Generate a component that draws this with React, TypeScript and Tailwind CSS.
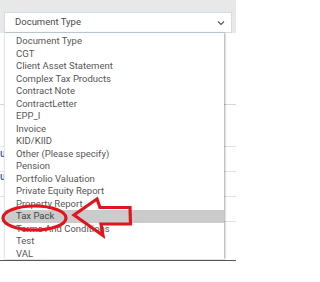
const options = [
  "Document Type",
  "CGT",
  "Client Asset Statement",
  "Complex Tax Products",
  "Contract Note",
  "ContractLetter",
  "EPP_I",
  "Invoice",
  "KID/KIID",
  "Other (Please specify)",
  "Pension",
  "Portfolio Valuation",
  "Private Equity Report",
  "Property Report",
  "Tax Pack",
  "Terms And Conditions",
  "Test",
  "VAL",
];

const selected = "Tax Pack";

function Chevron() {
  return (
    <svg width="8" height="6" viewBox="0 0 8 6" fill="none" className="text-[#555]">
      <path d="M1 1.5L4 4.5L7 1.5" stroke="currentColor" strokeWidth="1.2" />
    </svg>
  );
}

function Annotation() {
  return (
    <svg
      className="pointer-events-none absolute left-0 top-0"
      width="236"
      height="282"
      viewBox="0 0 236 282"
      fill="none"
    >
      <ellipse cx="34.5" cy="218" rx="31.5" ry="12" stroke="#e0161e" strokeWidth="3.2" />
      <path
        d="M74 215L97 199L100 207.5L130 207.5L130.5 224L101 224L103 235.5Z"
        stroke="#e0161e"
        strokeWidth="3.2"
        strokeLinejoin="miter"
      />
    </svg>
  );
}

export default function App() {
  return (
    <div className="relative h-[282px] w-[236px] overflow-hidden bg-white font-['Roboto',sans-serif]">
      {/* page behind the open select */}
      <div className="bg-[#e8e8e8] px-[4px] pt-[12px]">
        <div className="flex h-[21px] items-center justify-between border border-[#d3dbe5] bg-white pl-[10px] pr-[6px] text-[9.5px] text-[#4a4a4a]">
          <span>Document Type</span>
          <Chevron />
        </div>
      </div>
      <div className="flex flex-col">
        <div className="h-[72px] border-b border-[#d6d6d6]" />
        <div className="h-[42px] border-b border-[#e2e2e2]" />
        <div className="h-[25px] border-b border-[#e2e2e2] pt-[1px] text-[10px] leading-[12px] text-[#2a5da8]">
          <span className="font-medium">u</span>
        </div>
        <div className="h-[25px] border-b border-[#e2e2e2] text-[10px] leading-[10px] text-[#2a5da8]">
          <span className="font-medium">u</span>
        </div>
        <div className="h-[25px] border-b border-[#e2e2e2]" />
        <div className="h-[39px] border-b border-[#555]" />
      </div>

      {/* open options list */}
      <ul className="absolute left-[4px] top-[33px] h-[226px] w-[220px] border-l border-[#e6e6e6] bg-white pt-[2px] shadow-[1px_0_2px_rgba(0,0,0,0.35)]">
        {options.map((option) => (
          <li
            key={option}
            className={
              option === selected
                ? "h-[12.5px] bg-[#cbcbcb] pl-[11px] text-[9.5px] leading-[12.5px] text-[#444]"
                : "h-[12.5px] pl-[11px] text-[9.5px] leading-[12.5px] text-[#575757]"
            }
          >
            {option}
          </li>
        ))}
      </ul>

      <Annotation />
    </div>
  );
}
